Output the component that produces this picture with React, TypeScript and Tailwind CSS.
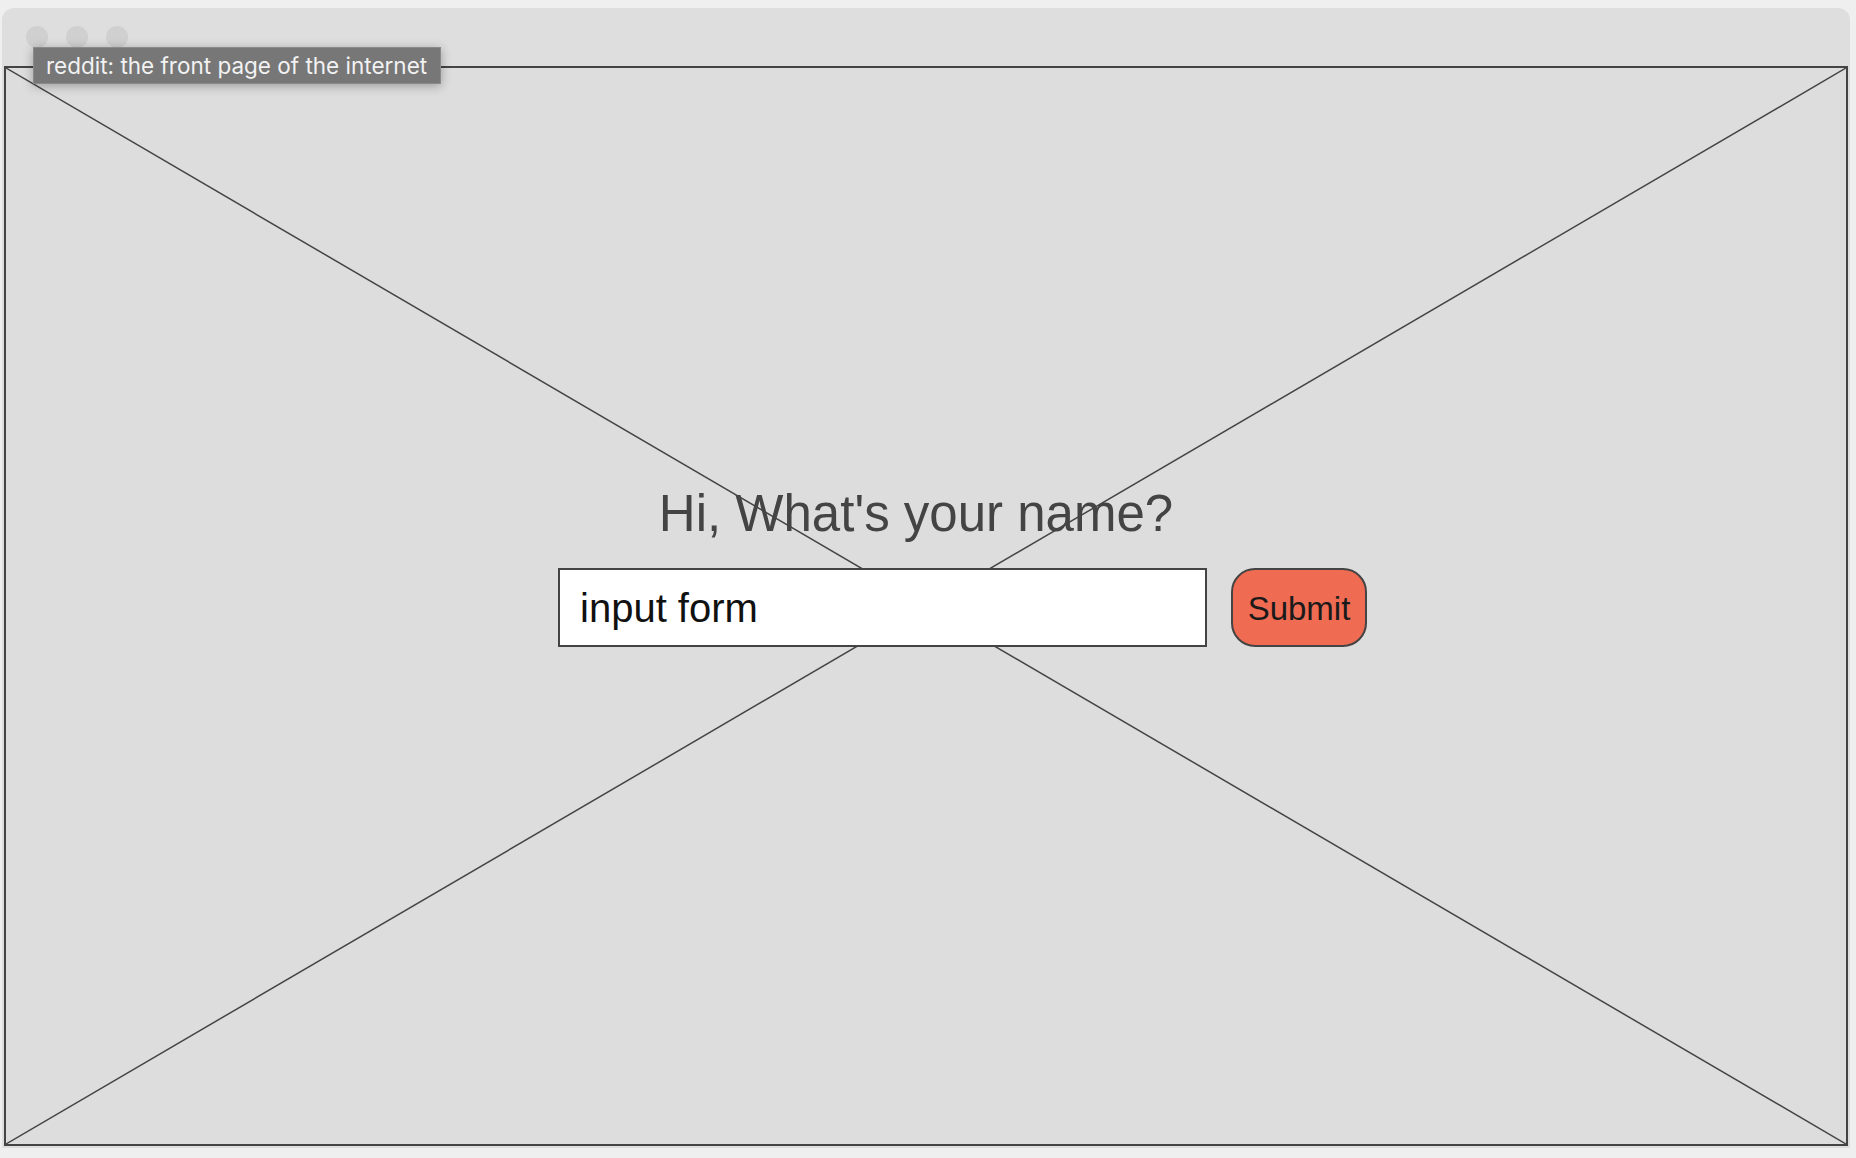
export default function App() {
  return (
    <div className="min-h-screen w-full bg-[#efefef] pt-[8px] pl-[2px] pr-[6px]">
      {/* browser window */}
      <div className="relative h-[1140px] w-[1848px] rounded-t-[12px] bg-[#dedede] px-[2px] pt-[58px] pb-[2px]">
        <div className="absolute left-[24px] top-[18px] flex gap-[18px]">
          <span className="h-[22px] w-[22px] rounded-full bg-[#d0d0d0]" />
          <span className="h-[22px] w-[22px] rounded-full bg-[#d0d0d0]" />
          <span className="h-[22px] w-[22px] rounded-full bg-[#d0d0d0]" />
        </div>

        {/* placeholder frame */}
        <div className="relative h-[1080px] w-[1844px] border-2 border-[#444] bg-[#dddddd]">
          <svg
            className="absolute inset-0 h-full w-full"
            viewBox="0 0 100 100"
            preserveAspectRatio="none"
          >
            <line x1="0" y1="0" x2="100" y2="100" stroke="#444" strokeWidth="1.5" vectorEffect="non-scaling-stroke" />
            <line x1="100" y1="0" x2="0" y2="100" stroke="#444" strokeWidth="1.5" vectorEffect="non-scaling-stroke" />
          </svg>

          <div className="relative flex h-full flex-col items-center justify-center pb-[77px] font-['Liberation_Sans',Arial,sans-serif]">
            <h1 className="mr-[20px] text-[51px] leading-[50px] text-[#444]">
              Hi, What's your name?
            </h1>
            <div className="mt-[29px] ml-[73px] flex items-center gap-[24px]">
              <input
                readOnly
                defaultValue="input form"
                className="h-[79px] w-[649px] border-2 border-[#444] bg-white pt-[3px] pl-[20px] text-[40px] text-[#111] outline-none"
              />
              <button className="h-[79px] w-[136px] rounded-[24px] border-2 border-[#444] bg-[#ef6b52] pt-[3px] text-[33px] text-[#1a1a1a]">
                Submit
              </button>
            </div>
          </div>
        </div>

        {/* tab title tooltip */}
        <div className="absolute left-[31px] top-[39px] flex h-[37px] w-[408px] items-center border border-[#8a8a8a] bg-[#777] pl-[12px] font-['Inter',sans-serif] text-[22.5px] text-[#f2f2f2] shadow-[0_2px_10px_rgba(0,0,0,0.3)]">
          reddit: the front page of the internet
        </div>
      </div>
    </div>
  );
}
